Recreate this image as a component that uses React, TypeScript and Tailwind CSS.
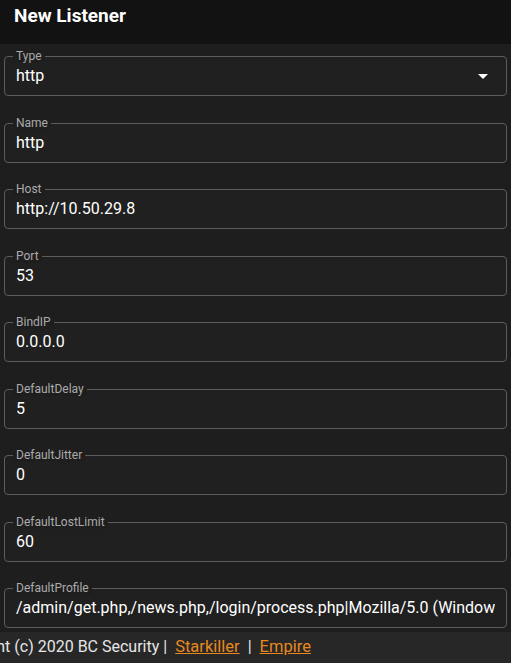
const fields = [
  { label: 'Type', value: 'http', select: true },
  { label: 'Name', value: 'http' },
  { label: 'Host', value: 'http://10.50.29.8' },
  { label: 'Port', value: '53' },
  { label: 'BindIP', value: '0.0.0.0' },
  { label: 'DefaultDelay', value: '5' },
  { label: 'DefaultJitter', value: '0' },
  { label: 'DefaultLostLimit', value: '60' },
  {
    label: 'DefaultProfile',
    value:
      '/admin/get.php,/news.php,/login/process.php|Mozilla/5.0 (Windows NT 6.1; WOW64; Trident/7.0; rv:11.0) like Gecko',
  },
];

function Field({ label, value, select }: { label: string; value: string; select?: boolean }) {
  return (
    <div className="relative h-[40px] rounded border border-[#5c5c5c] bg-[#202020] flex items-center pl-[11px] pr-[11px]">
      <span className="absolute -top-[8px] left-[8px] px-[3px] bg-[#1e1e1e] text-[12px] leading-[14px] text-[#ababab]">
        {label}
      </span>
      <span className="flex-1 min-w-0 overflow-hidden whitespace-nowrap text-[16px] text-white">{value}</span>
      {select && (
        <svg width="10" height="5" viewBox="0 0 10 5" className="mr-[7px] shrink-0">
          <path d="M0 0 L10 0 L5 5 Z" fill="#ffffff" />
        </svg>
      )}
    </div>
  );
}

export default function App() {
  return (
    <div className="w-[511px] h-[663px] overflow-hidden bg-[#1e1e1e] flex flex-col font-['Roboto',sans-serif]">
      <header className="h-[44px] shrink-0 bg-[#121212] px-[14px] pt-[5px]">
        <h1 className="text-[19px] font-bold text-white leading-[22px]">New Listener</h1>
      </header>

      <main className="flex-1 px-[4px] pt-[12px] flex flex-col gap-[26.5px]">
        {fields.map((f) => (
          <Field key={f.label} {...f} />
        ))}
      </main>

      <footer className="h-[31px] shrink-0 bg-[#272727] flex items-center whitespace-nowrap text-[16px] text-[#e6e6e6]">
        <span className="ml-[-58px]">
          Copyright (c) 2020 BC Security |
          <a className="text-[#e8891e] underline text-[16.5px] ml-[8px]">Starkiller</a>
          <span className="mx-[8px]">|</span>
          <a className="text-[#e8891e] underline text-[16.5px]">Empire</a>
        </span>
      </footer>
    </div>
  );
}
